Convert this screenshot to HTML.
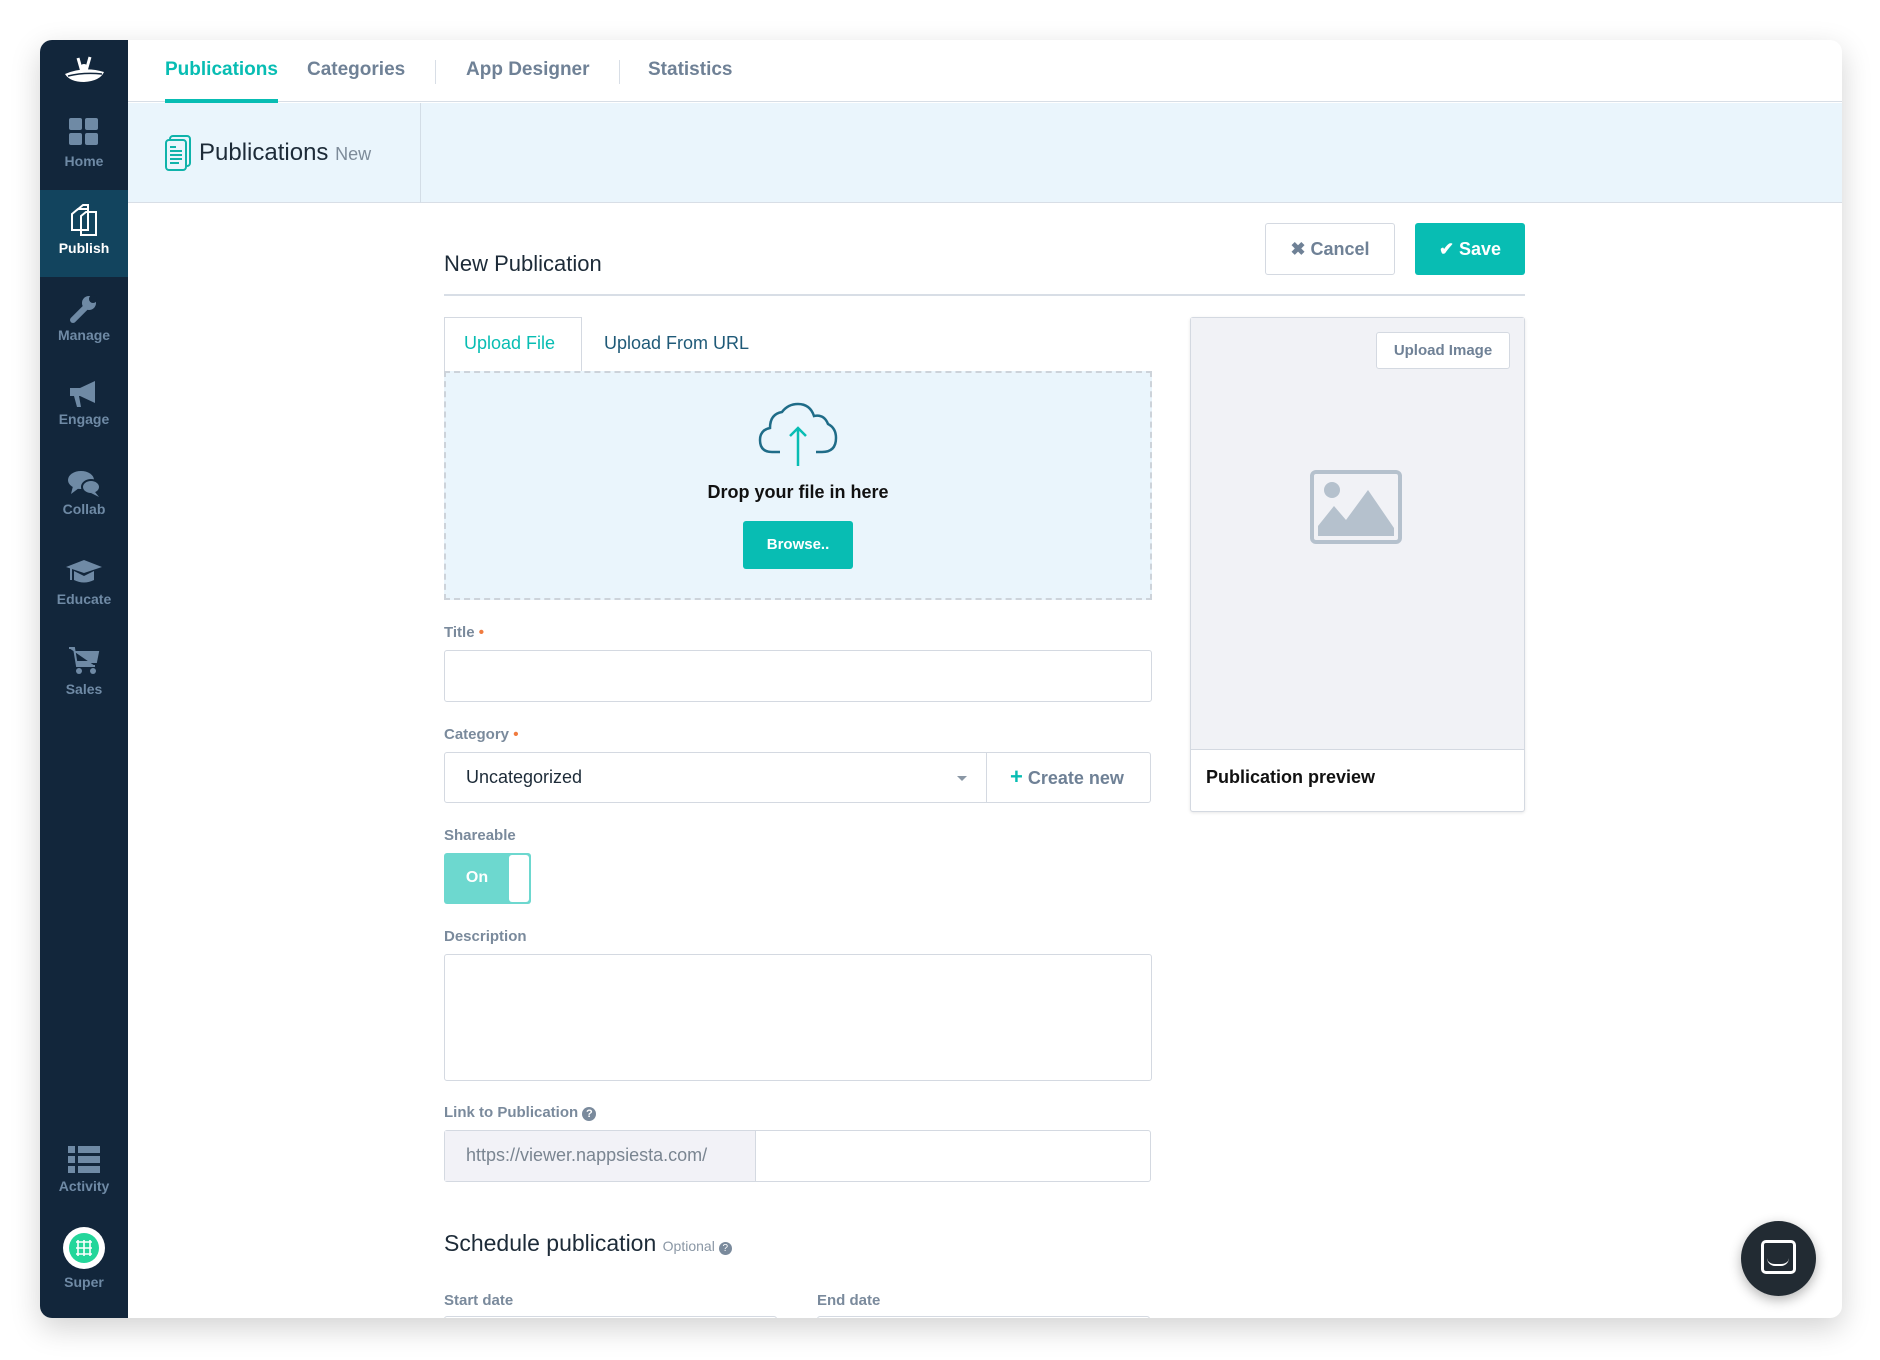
<!DOCTYPE html>
<html><head><meta charset="utf-8"><style>
*{box-sizing:border-box;margin:0;padding:0}
body{width:1880px;height:1360px;background:#fff;font-family:"Liberation Sans",sans-serif;position:relative;overflow:hidden}
.card{position:absolute;left:40px;top:40px;width:1802px;height:1278px;border-radius:12px;overflow:hidden;background:#fff;box-shadow:0 10px 30px rgba(0,0,0,.18)}
.side{position:absolute;left:0;top:0;width:88px;height:100%;background:#12263b}
.si{position:absolute;left:0;width:88px;text-align:center;color:#6f8aa5;font-weight:bold;font-size:14px}
.si svg{display:block;margin:0 auto}
.abs{position:absolute}
.nav{font-weight:bold;font-size:19px;color:#6f8196}
.lbl{position:absolute;font-weight:bold;font-size:15px;color:#7a8a9c}
.req{color:#f07b3f}
.inp{position:absolute;border:1px solid #d4d9e1;border-radius:3px;background:#fff}
</style></head><body>
<div class="card">
 <div class="side">
  <svg class="abs" style="left:22px;top:14px" width="44" height="32" viewBox="0 0 44 32"><path d="M3 20 Q22 12 42 18 Q38 27 22 28 Q8 28 3 20Z" fill="#fff"/><path d="M16 4 L20 18 M28 3 L24 17" stroke="#fff" stroke-width="3"/><circle cx="22" cy="14" r="4" fill="#fff"/><path d="M6 22 Q22 18 40 20" stroke="#12263b" stroke-width="1.5" fill="none"/></svg>
  <div class="si" style="top:78px"><svg width="30" height="28"><rect x="0" y="0" width="13" height="12" rx="2" fill="#6f8aa5"/><rect x="16" y="0" width="13" height="12" rx="2" fill="#6f8aa5"/><rect x="0" y="15" width="13" height="12" rx="2" fill="#6f8aa5"/><rect x="16" y="15" width="13" height="12" rx="2" fill="#6f8aa5"/></svg><div style="margin-top:7px">Home</div></div>
  <div class="abs" style="left:0;top:150px;width:88px;height:87px;background:#12445e"></div>
  <div class="si" style="top:164px;color:#fff"><svg width="30" height="32"><path d="M8 6 L14 1 H19 V6 M3 10 L9 5 H19 V26 H3Z M12 12 L17 8 H27 V31 H12Z" fill="none" stroke="#fff" stroke-width="2"/></svg><div style="margin-top:4px">Publish</div></div>
  <div class="si" style="top:254px"><svg width="30" height="30"><path d="M4 26 L16 14" stroke="#6f8aa5" stroke-width="6" stroke-linecap="round"/><circle cx="20" cy="9" r="7" fill="#6f8aa5"/><circle cx="24" cy="5" r="4" fill="#12263b"/></svg><div style="margin-top:3px">Manage</div></div>
  <div class="si" style="top:340px"><svg width="32" height="28"><path d="M2 8 H12 L27 1 V23 L12 16 H2Z M6 16 L9 27 H13 L11 16" fill="#6f8aa5"/></svg><div style="margin-top:3px">Engage</div></div>
  <div class="si" style="top:430px"><svg width="34" height="28"><ellipse cx="14" cy="10" rx="13" ry="9" fill="#6f8aa5"/><path d="M6 16 L4 24 L12 18Z" fill="#6f8aa5"/><ellipse cx="24" cy="17" rx="9" ry="7" fill="#6f8aa5" stroke="#12263b" stroke-width="2"/><path d="M28 22 L32 27 L24 23Z" fill="#6f8aa5"/></svg><div style="margin-top:3px">Collab</div></div>
  <div class="si" style="top:518px"><svg width="38" height="28"><path d="M1 9 L19 2 L37 9 L19 15Z M9 13 V22 Q19 27 29 22 V13 L19 18Z" fill="#6f8aa5"/><path d="M6 10 V22" stroke="#6f8aa5" stroke-width="2"/></svg><div style="margin-top:5px">Educate</div></div>
  <div class="si" style="top:606px"><svg width="32" height="30"><path d="M1 2 H6 L9 20 H27 M7 6 H30 L28 16 H9" fill="#6f8aa5" stroke="#6f8aa5" stroke-width="2"/><circle cx="11" cy="25" r="3" fill="#6f8aa5"/><circle cx="25" cy="25" r="3" fill="#6f8aa5"/></svg><div style="margin-top:5px">Sales</div></div>
  <div class="si" style="top:1105px"><svg width="32" height="28"><rect x="0" y="1" width="7" height="7" fill="#6f8aa5"/><rect x="10" y="1" width="22" height="7" fill="#6f8aa5"/><rect x="0" y="11" width="7" height="7" fill="#6f8aa5"/><rect x="10" y="11" width="22" height="7" fill="#6f8aa5"/><rect x="0" y="21" width="7" height="7" fill="#6f8aa5"/><rect x="10" y="21" width="22" height="7" fill="#6f8aa5"/></svg><div style="margin-top:5px">Activity</div></div>
  <div class="si" style="top:1186px"><svg width="44" height="44"><circle cx="22" cy="22" r="21" fill="#fff"/><circle cx="22" cy="22" r="15" fill="#23d69a"/><path d="M14 16 H30 M14 22 H30 M14 28 H30 M16 14 V30 M22 14 V30 M28 14 V30" stroke="#fff" stroke-width="1.6"/></svg><div style="margin-top:4px">Super</div></div>
 </div>
 <div class="abs" style="left:88px;top:0;right:0;height:62px;border-bottom:1px solid #d8dee6"></div>
 <div class="abs nav" style="left:125px;top:19px;color:#08bdb3">Publications</div>
 <div class="abs" style="left:125px;top:59px;width:113px;height:4px;background:#08bdb3"></div>
 <div class="abs nav" style="left:267px;top:19px">Categories</div>
 <div class="abs" style="left:395px;top:20px;width:1px;height:24px;background:#d8dee6"></div>
 <div class="abs nav" style="left:426px;top:19px">App Designer</div>
 <div class="abs" style="left:579px;top:20px;width:1px;height:24px;background:#d8dee6"></div>
 <div class="abs nav" style="left:608px;top:19px">Statistics</div>
 <div class="abs" style="left:88px;top:63px;right:0;height:100px;background:#eaf5fc;border-bottom:1px solid #d8dee6"></div>
 <div class="abs" style="left:380px;top:63px;width:1px;height:100px;background:#d3dde6"></div>
 <svg class="abs" style="left:124px;top:95px" width="28" height="36" viewBox="0 0 28 36"><rect x="6" y="1" width="20" height="30" rx="3" fill="#eaf5fc" stroke="#0fb3aa" stroke-width="2"/><rect x="2" y="5" width="20" height="30" rx="3" fill="#eaf5fc" stroke="#0fb3aa" stroke-width="2"/><path d="M6 12 H12 M6 16 H18 M6 20 H18 M6 24 H18 M6 28 H15" stroke="#0fb3aa" stroke-width="2"/></svg>
 <div class="abs" style="left:159px;top:99px;font-size:24px;color:#1d2b38">Publications <span style="font-size:18px;color:#7d8b99">New</span></div>
 <div class="abs" style="left:404px;top:211px;font-size:22px;color:#1d2b38">New Publication</div>
 <div class="abs" style="left:1225px;top:183px;width:130px;height:52px;border:1px solid #d4d9e1;border-radius:3px;text-align:center;line-height:50px;font-weight:bold;font-size:18px;color:#6f8196">✖ Cancel</div>
 <div class="abs" style="left:1375px;top:183px;width:110px;height:52px;background:#08bdb3;border-radius:3px;text-align:center;line-height:52px;font-weight:bold;font-size:18px;color:#fff">✔ Save</div>
 <div class="abs" style="left:404px;top:254px;width:1081px;height:2px;background:#d8dee6"></div>
 <div class="abs" style="left:404px;top:277px;width:138px;height:56px;border:1px solid #d4d9e1;border-bottom:none;background:#fff"></div>
 <div class="abs" style="left:424px;top:293px;font-size:18px;color:#08bdb3">Upload File</div>
 <div class="abs" style="left:564px;top:293px;font-size:18px;color:#1f5a78">Upload From URL</div>
 <div class="abs" style="left:404px;top:331px;width:708px;height:229px;background:#eaf5fc;border:2px dashed #cdd3da"></div>
 <svg class="abs" style="left:718px;top:362px" width="80" height="66" viewBox="0 0 80 66"><path d="M22 50 H14 Q2 50 2 38 Q2 28 12 26 Q12 12 24 10 Q30 2 40 2 Q52 2 56 14 Q66 12 70 22 Q78 26 78 36 Q78 50 64 50 H58" fill="none" stroke="#1f6c88" stroke-width="2.5"/><path d="M40 64 V26 M32 34 L40 26 L48 34" fill="none" stroke="#08bdb3" stroke-width="2.5"/></svg>
 <div class="abs" style="left:404px;top:442px;width:708px;text-align:center;font-weight:bold;font-size:18px;color:#111">Drop your file in here</div>
 <div class="abs" style="left:703px;top:481px;width:110px;height:48px;background:#08bdb3;border-radius:3px;text-align:center;line-height:48px;font-weight:bold;font-size:15px;color:#fff">Browse..</div>
 <div class="abs" style="left:1150px;top:277px;width:335px;height:495px;border:1px solid #d4d9e1;border-radius:3px;background:#fff;box-shadow:0 1px 3px rgba(0,0,0,.1)"></div>
 <div class="abs" style="left:1151px;top:278px;width:333px;height:432px;background:#f1f2f6;border-bottom:1px solid #d4d9e1"></div>
 <div class="abs" style="left:1336px;top:292px;width:134px;height:37px;border:1px solid #d4d9e1;border-radius:3px;background:#fff;text-align:center;line-height:35px;font-weight:bold;font-size:15px;color:#6f8196">Upload Image</div>
 <svg class="abs" style="left:1270px;top:430px" width="92" height="74" viewBox="0 0 92 74"><rect x="2" y="2" width="88" height="70" rx="4" fill="none" stroke="#b5c1cd" stroke-width="4"/><circle cx="22" cy="20" r="8" fill="#b5c1cd"/><path d="M8 66 L8 56 L24 36 L36 50 L58 20 L84 58 V66Z" fill="#b5c1cd"/></svg>
 <div class="abs" style="left:1166px;top:727px;font-weight:bold;font-size:18px;color:#111">Publication preview</div>
 <div class="lbl" style="left:404px;top:584px">Title <span class="req">•</span></div>
 <div class="inp" style="left:404px;top:610px;width:708px;height:52px"></div>
 <div class="lbl" style="left:404px;top:686px">Category <span class="req">•</span></div>
 <div class="inp" style="left:404px;top:712px;width:707px;height:51px"></div>
 <div class="abs" style="left:946px;top:713px;width:1px;height:49px;background:#d4d9e1"></div>
 <div class="abs" style="left:426px;top:727px;font-size:18px;color:#1d2b38">Uncategorized</div>
 <div class="abs" style="left:917px;top:736px;border-left:5px solid transparent;border-right:5px solid transparent;border-top:5px solid #8a97a5"></div>
 <div class="abs" style="left:970px;top:724px;font-weight:bold;font-size:18px;color:#6f8196"><span style="color:#08bdb3;font-size:22px">+</span> Create new</div>
 <div class="lbl" style="left:404px;top:787px">Shareable</div>
 <div class="abs" style="left:404px;top:813px;width:87px;height:51px;background:#6dd8cf;border-radius:3px"></div>
 <div class="abs" style="left:469px;top:815px;width:20px;height:47px;background:#fff;border-radius:3px"></div>
 <div class="abs" style="left:404px;top:829px;width:66px;text-align:center;font-weight:bold;font-size:16px;color:#fff">On</div>
 <div class="lbl" style="left:404px;top:888px">Description</div>
 <div class="inp" style="left:404px;top:914px;width:708px;height:127px"></div>
 <div class="lbl" style="left:404px;top:1064px">Link to Publication <span style="display:inline-block;width:14px;height:14px;border-radius:7px;background:#7a8a9c;color:#fff;font-size:11px;text-align:center;line-height:14px">?</span></div>
 <div class="inp" style="left:404px;top:1090px;width:707px;height:52px"></div>
 <div class="abs" style="left:405px;top:1091px;width:311px;height:50px;background:#f2f2f7;border-right:1px solid #d4d9e1"></div>
 <div class="abs" style="left:426px;top:1105px;font-size:18px;color:#7a8591">https://viewer.nappsiesta.com/</div>
 <div class="abs" style="left:404px;top:1190px;font-size:23px;color:#1d2b38">Schedule publication <span style="font-size:14px;color:#8a97a5">Optional <span style="display:inline-block;width:13px;height:13px;border-radius:7px;background:#7a8a9c;color:#fff;font-size:10px;text-align:center;line-height:13px">?</span></span></div>
 <div class="lbl" style="left:404px;top:1252px">Start date</div>
 <div class="lbl" style="left:777px;top:1252px">End date</div>
 <div class="inp" style="left:404px;top:1276px;width:333px;height:40px"></div>
 <div class="inp" style="left:777px;top:1276px;width:333px;height:40px"></div>
 <div class="abs" style="left:1701px;top:1181px;width:75px;height:75px;border-radius:50%;background:#222b33;box-shadow:0 4px 12px rgba(0,0,0,.3)"></div>
 <div class="abs" style="left:1721px;top:1200px;width:35px;height:34px;border:3px solid #fff;border-radius:5px;background:#222b33"></div>
 <div class="abs" style="left:1727px;top:1218px;width:22px;height:8px;border-bottom:2px solid #fff;border-radius:0 0 10px 10px"></div>
</div>
</body></html>
